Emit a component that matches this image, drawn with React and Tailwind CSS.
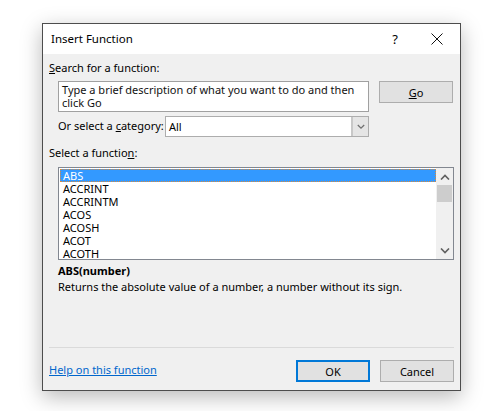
import React from "react";

const font = { fontFamily: '"Noto Sans", "Open Sans", sans-serif' };

const functions = ["ABS", "ACCRINT", "ACCRINTM", "ACOS", "ACOSH", "ACOT", "ACOTH"];

function Chevron({ up, className }) {
  return (
    <svg width="10" height="6" viewBox="0 0 10 6" className={className}>
      <path
        d={up ? "M1 5.5 L5 1.5 L9 5.5" : "M1 0.5 L5 4.5 L9 0.5"}
        fill="none"
        stroke="currentColor"
        strokeWidth="1.6"
      />
    </svg>
  );
}

export default function App() {
  return (
    <div className="w-[491px] h-[411px] bg-white pt-[23px] pl-[42px] text-[11px] text-black" style={font}>
      <div className="w-[419px] h-[368px] border border-[#4d4d4d] bg-[#f0f0f0] flex flex-col shadow-[0_6px_20px_rgba(0,0,0,0.28)]">
        {/* title bar */}
        <div className="h-[30px] bg-white flex items-center pl-[8px] shrink-0">
          <span className="flex-1 leading-none text-[11.5px]">Insert Function</span>
          <span className="w-[20px] text-center mr-[26px] text-[13px] leading-none">?</span>
          <svg width="12" height="12" viewBox="0 0 12 12" className="mr-[17px]">
            <path d="M0.5 0.5 L11.5 11.5 M11.5 0.5 L0.5 11.5" stroke="#111" strokeWidth="1" />
          </svg>
        </div>

        <div className="flex-1 flex flex-col pl-[6px] pr-[6px]">
          <div className="mt-[7px] h-[14px] leading-[14px]">
            <u>S</u>earch for a function:
          </div>

          <div className="flex mt-[6px] h-[31px]">
            <div className="ml-[9px] w-[311px] h-[31px] bg-white border border-[#a0a0a0] px-[3px] pt-[1px] leading-[13px] text-[#111]">
              Type a brief description of what you want to do and then click Go
            </div>
            <button className="ml-[10px] w-[74px] h-[22px] bg-[#e1e1e1] border border-[#adadad] leading-none">
              <u>G</u>o
            </button>
          </div>

          <div className="flex items-center mt-[4px] h-[21px]">
            <span className="ml-[9px] w-[107px] whitespace-nowrap">
              Or select a <u>c</u>ategory:
            </span>
            <div className="w-[204px] h-[21px] bg-white border border-[#adadad] flex items-stretch">
              <span className="flex-1 pl-[3px] leading-[19px]">All</span>
              <div className="w-[17px] bg-[#e5e5e5] border-l-2 border-[#c8c8c8] flex items-center justify-center text-[#707070]">
                <Chevron className="w-[8px]" />
              </div>
            </div>
          </div>

          <div className="mt-[9px] h-[14px] leading-[14px]">
            Select a functio<u>n</u>:
          </div>

          <div className="ml-[9px] mt-[7px] w-[396px] h-[93px] bg-white border border-[#828790] flex">
            <div className="flex-1 pt-[1px] pl-[1px]">
              {functions.map((f, i) => (
                <div
                  key={f}
                  className={
                    i === 0
                      ? "h-[13px] flex items-center leading-none pl-[2px] bg-[#3399ff] text-white border border-dotted border-[#d98a3a]"
                      : "h-[13px] flex items-center leading-none pl-[3px]"
                  }
                >
                  {f}
                </div>
              ))}
            </div>
            <div className="w-[17px] bg-[#f0f0f0] flex flex-col items-center text-[#606060]">
              <div className="h-[17px] flex items-center justify-center">
                <Chevron up />
              </div>
              <div className="w-[15px] h-[17px] bg-[#cdcdcd]" />
              <div className="flex-1" />
              <div className="h-[17px] flex items-center justify-center">
                <Chevron />
              </div>
            </div>
          </div>

          <div className="ml-[9px] mt-[4px] h-[14px] leading-[14px] font-bold">ABS(number)</div>
          <div className="ml-[9px] mt-[2px] h-[14px] leading-[14px]">
            Returns the absolute value of a number, a number without its sign.
          </div>

          <div className="mt-[53px] h-px bg-[#dadada]" />

          <div className="flex items-center mt-[12px] h-[22px]">
            <a className="flex-1 text-[#0066cc] underline leading-none -mt-[3px]">Help on this function</a>
            <button className="w-[74px] h-[22px] bg-[#e1e1e1] border-2 border-[#0078d7] leading-none">OK</button>
            <button className="ml-[10px] w-[74px] h-[22px] bg-[#e1e1e1] border border-[#adadad] leading-none">Cancel</button>
          </div>
        </div>
      </div>
    </div>
  );
}
